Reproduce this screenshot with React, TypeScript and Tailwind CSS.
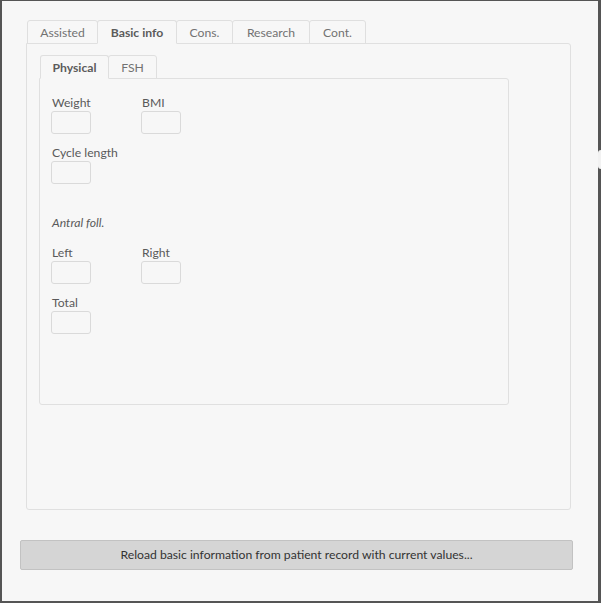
import React from 'react';

const outerTabs = ['Assisted', 'Basic info', 'Cons.', 'Research', 'Cont.'];
const outerWidths = ['w-[71px]', 'w-[80px]', 'w-[57px]', 'w-[78px]', 'w-[57px]'];

function Field({ label }: { label: string }) {
  return (
    <div className="flex flex-col w-[90px]">
      <span className="h-4 leading-4 pl-[1px] text-[#5a5a5a]">{label}</span>
      <div className="w-10 h-[23px] border border-[#dadada] rounded-[3px] bg-[#f7f7f7]" />
    </div>
  );
}

export default function App() {
  return (
    <div
      className="relative w-[601px] h-[603px] bg-[#f7f7f7] border-l-2 border-t border-r-[3px] border-b-2 border-[#555555] flex flex-col text-[12.2px] text-[#5a5a5a]"
      style={{ fontFamily: 'Lato, "Open Sans", sans-serif' }}
    >
      {/* notch in the right frame */}
      <div className="absolute right-[-3px] top-[149px] w-[3px] h-[19px] bg-[#f2f2f2] rounded-l-sm" />

      {/* OUTER TABS */}
      <div className="ml-[25px] mt-[19px] flex">
        {outerTabs.map((t, i) => {
          const active = i === 1;
          return (
            <div
              key={t}
              className={
                'h-6 pt-[2px] flex items-center justify-center border border-[#dfdfdf] rounded-t-[3px] bg-[#f7f7f7] -ml-px first:ml-0 ' +
                outerWidths[i] +
                (active
                  ? ' border-b-[#f7f7f7] font-bold text-[#5b5b5b] z-10'
                  : ' text-[#727272]')
              }
            >
              {t}
            </div>
          );
        })}
      </div>
      <div className="ml-[24px] w-[545px] h-[467px] -mt-px border border-[#e0e0e0] rounded-b-[3px] rounded-tr-[3px] flex flex-col pt-[11px] pl-[12px]">
        {/* INNER TABS */}
        <div className="ml-px flex">
          <div className="w-[69px] h-6 pt-[2px] flex items-center justify-center border border-[#dfdfdf] border-b-[#f7f7f7] rounded-t-[3px] font-bold text-[#5b5b5b] z-10">
            Physical
          </div>
          <div className="w-[49px] h-6 pt-[2px] -ml-px flex items-center justify-center border border-[#dfdfdf] rounded-t-[3px] text-[#727272]">
            FSH
          </div>
        </div>
        <div className="w-[470px] h-[327px] -mt-px border border-[#e0e0e0] rounded-b-[3px] rounded-tr-[3px] pt-4 pl-[11px] flex flex-col">
          <div className="flex">
            <Field label="Weight" />
            <Field label="BMI" />
          </div>
          <div className="flex mt-[11px]">
            <Field label="Cycle length" />
          </div>
          <div className="mt-[31px] h-4 leading-4 pl-[1px] italic text-[#5a5a5a]">Antral foll.</div>
          <div className="flex mt-[14px]">
            <Field label="Left" />
            <Field label="Right" />
          </div>
          <div className="flex mt-[11px]">
            <Field label="Total" />
          </div>
        </div>
      </div>

      {/* BUTTON */}
      <button className="ml-[18px] mt-[30px] w-[553px] h-[30px] bg-[#d5d5d5] border border-[#c2c2c2] rounded-[2px] text-[#333333] flex items-center justify-center">
        Reload basic information from patient record with current values...
      </button>
    </div>
  );
}
